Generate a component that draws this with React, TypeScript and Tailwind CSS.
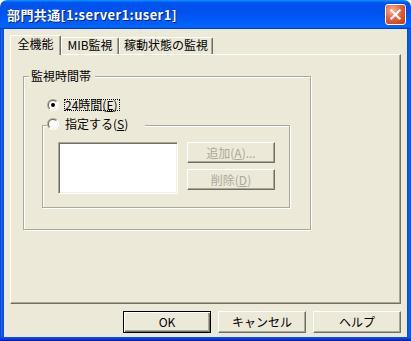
import React from "react";

function Radio({ checked, id }: { checked?: boolean; id: string }) {
  return (
    <svg width="12" height="12" viewBox="0 0 12 12" className="shrink-0 block">
      <defs>
        <linearGradient id={`${id}o`} x1="0" y1="0" x2="1" y2="1">
          <stop offset="0.5" stopColor="#ACA899" />
          <stop offset="0.5" stopColor="#FFFFFF" />
        </linearGradient>
        <linearGradient id={`${id}i`} x1="0" y1="0" x2="1" y2="1">
          <stop offset="0.5" stopColor="#716F64" />
          <stop offset="0.5" stopColor="#F1EFE2" />
        </linearGradient>
      </defs>
      <circle cx="6" cy="6" r="6" fill={`url(#${id}o)`} />
      <circle cx="6" cy="6" r="5" fill={`url(#${id}i)`} />
      <circle cx="6" cy="6" r="4" fill="#fff" />
      {checked && <circle cx="6" cy="6" r="2" fill="#000" />}
    </svg>
  );
}

function U({ children }: { children: React.ReactNode }) {
  return <span className="underline underline-offset-[1px]">{children}</span>;
}

export default function App() {
  return (
    <div className="w-[411px] h-[341px] overflow-hidden flex flex-col font-['Noto_Sans_CJK_JP',sans-serif] text-[12px] text-black bg-white">
      {/* Title bar */}
      <div className="h-[29px] shrink-0 rounded-t-[7px] flex items-center pl-[7px] pr-[5px] bg-[linear-gradient(180deg,#0997ff_0%,#0053ee_9%,#0050ee_40%,#0063fb_85%,#0066ff_92%,#005bff_95%,#003dd7_97%,#003dd7_100%)]">
        <div className="flex-1 text-white font-bold text-[13px] leading-[16px] tracking-[0.4px] [text-shadow:1px_1px_0_#0a1b80]">
          部門共通[1:server1:user1]
        </div>
        <div className="w-[21px] h-[21px] rounded-[3px] border border-white flex items-center justify-center bg-[radial-gradient(circle_at_35%_30%,#f5b49b_0%,#e8643f_45%,#d24418_80%,#c33a10_100%)]">
          <svg width="13" height="13" viewBox="0 0 13 13">
            <path d="M2.5 2.5 L10.5 10.5 M10.5 2.5 L2.5 10.5" stroke="#fff" strokeWidth="2.2" strokeLinecap="square" />
          </svg>
        </div>
      </div>

      {/* Middle */}
      <div className="h-[308px] shrink-0 flex">
        <div className="w-[4px] bg-[linear-gradient(90deg,#0831d9,#166aee,#0855dd,#0a45d8)]" />
        <div className="flex-1 bg-[#ECE9D8] flex flex-col px-[6px]">
          {/* Tabs */}
          <div className="mt-[6px] h-[19px] flex items-end">
            <div className="relative z-10 w-[51px] h-[20px] -mb-[1px] bg-[#ECE9D8] border-t border-l border-white border-r border-r-[#716F64] rounded-t-[2px] shadow-[inset_-1px_0_0_#ACA899] text-center pt-[1px] leading-[14px]">
              全機能
            </div>
            <div className="w-[58px] h-[17px] border-t border-l border-white border-r border-r-[#716F64] rounded-t-[2px] shadow-[inset_-1px_0_0_#ACA899] text-center leading-[14px]">
              MIB監視
            </div>
            <div className="w-[94px] h-[17px] border-t border-l border-white border-r border-r-[#716F64] rounded-t-[2px] shadow-[inset_-1px_0_0_#ACA899] text-center leading-[14px]">
              稼動状態の監視
            </div>
          </div>

          {/* Panel */}
          <div className="h-[250px] border-t border-l border-white border-r border-b border-r-[#716F64] border-b-[#716F64] shadow-[inset_-1px_-1px_0_#ACA899] pl-[12px] pt-[21px]">
            {/* Outer group */}
            <div className="relative w-[288px] h-[154px] border border-[#ACA899] shadow-[inset_1px_1px_0_#fff,1px_1px_0_#fff] flex flex-col pt-[22px]">
              <div className="absolute left-[5px] top-[-9px] w-[66px] h-[16px] leading-[16px] pl-[2px] bg-[#ECE9D8]">
                監視時間帯
              </div>
              <div className="ml-[23px] h-[12px] flex items-center">
                <Radio checked id="r1" />
                <span className="ml-[5px] border border-dotted border-black h-[12px] leading-[10px] pr-[1px]">
                  24時間(<U>E</U>)
                </span>
              </div>
              {/* Inner group */}
              <div className="relative ml-[18px] mt-[14px] w-[248px] h-[83px] border border-[#ACA899] shadow-[inset_1px_1px_0_#fff,1px_1px_0_#fff] flex pl-[15px] pt-[16px]">
                <div className="absolute left-[4px] top-[-10px] w-[98px] h-[16px] bg-[#ECE9D8] flex items-center">
                  <Radio id="r2" />
                  <span className="ml-[6px] leading-[14px]">
                    指定する(<U>S</U>)
                  </span>
                </div>
                <div className="w-[120px] h-[52px] bg-white border border-t-[#ACA899] border-l-[#ACA899] border-r-white border-b-white shadow-[inset_1px_1px_0_#716F64,inset_-1px_-1px_0_#F1EFE2]" />
                <div className="ml-[9px] flex flex-col gap-[6px]">
                  <div className="w-[88px] h-[21px] border border-t-white border-l-white border-r-[#716F64] border-b-[#716F64] shadow-[inset_-1px_-1px_0_#ACA899] flex items-center justify-center text-[#ACA899] leading-[14px]">
                    追加(<U>A</U>)...
                  </div>
                  <div className="w-[88px] h-[21px] border border-t-white border-l-white border-r-[#716F64] border-b-[#716F64] shadow-[inset_-1px_-1px_0_#ACA899] flex items-center justify-center text-[#ACA899] leading-[14px]">
                    削除(<U>D</U>)
                  </div>
                </div>
              </div>
            </div>
          </div>

          {/* Bottom buttons */}
          <div className="mt-[7px] flex justify-end gap-[7px]">
            <div className="w-[88px] h-[22px] border border-black shadow-[inset_1px_1px_0_#fff,inset_-1px_-1px_0_#716F64,inset_-2px_-2px_0_#ACA899] flex items-center justify-center leading-[14px]">
              OK
            </div>
            <div className="w-[88px] h-[22px] border border-t-white border-l-white border-r-[#716F64] border-b-[#716F64] shadow-[inset_-1px_-1px_0_#ACA899] flex items-center justify-center leading-[14px]">
              キャンセル
            </div>
            <div className="w-[88px] h-[22px] border border-t-white border-l-white border-r-[#716F64] border-b-[#716F64] shadow-[inset_-1px_-1px_0_#ACA899] flex items-center justify-center leading-[14px]">
              ヘルプ
            </div>
          </div>
        </div>
        <div className="w-[4px] bg-[linear-gradient(90deg,#0a45d8,#0855dd,#166aee,#0831d9)]" />
      </div>

      {/* Bottom border */}
      <div className="h-[4px] shrink-0 bg-[linear-gradient(180deg,#0855dd,#0a45d8,#0831d9,#00138c)]" />
    </div>
  );
}
